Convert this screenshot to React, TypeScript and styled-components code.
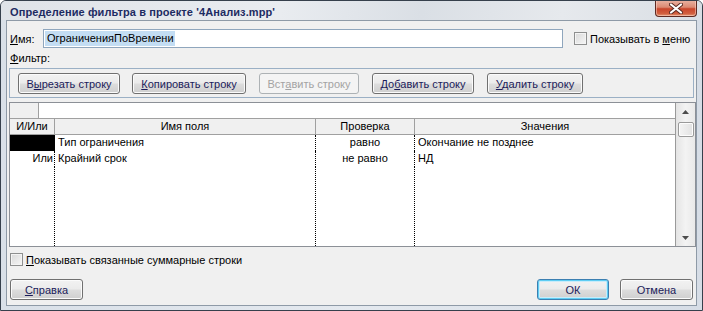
import React from 'react';
import styled, { createGlobalStyle, css } from 'styled-components';

const Global = createGlobalStyle`
  html, body { margin: 0; padding: 0; background: #fff; }
  body { font-family: "Liberation Sans", Arial, sans-serif; font-size: 11px; color: #000; }
  #root { width: 703px; height: 311px; }
  * { box-sizing: border-box; }
`;

const Window = styled.div`
  width: 703px;
  height: 311px;
  display: flex;
  flex-direction: column;
  background: linear-gradient(90deg, #d9e0e8, #e4e9ef 50%, #d6dde6);
  border: 1px solid #36404c;
  border-radius: 6px 6px 0 0;
  padding: 0 5px 4px 5px;
  overflow: hidden;
`;

const TitleBar = styled.div`
  height: 19px;
  margin: 0 -5px;
  padding: 0 5px 0 9px;
  display: flex;
  align-items: flex-start;
  justify-content: space-between;
  background: linear-gradient(100deg, #dfe3e8 0%, #e9ecf0 40%, #dadfe5 60%, #e6e9ed 80%, #d9dee4 100%);
`;

const Title = styled.div`
  font-weight: bold;
  font-size: 11px;
  color: #1d2b62;
  padding-top: 5px;
  letter-spacing: 0.1px;
`;

const Close = styled.div`
  width: 42px;
  height: 17px;
  margin-top: -1px;
  border: 1px solid #5e2a22;
  border-top: none;
  border-radius: 0 0 4px 4px;
  background: linear-gradient(#eab4a4 0%, #dc8a73 45%, #c9452b 55%, #d2603f 85%, #e39a77 100%);
  box-shadow: inset 0 0 0 1px rgba(255, 220, 210, 0.5);
  display: flex;
  align-items: center;
  justify-content: center;
`;

const Client = styled.div`
  flex: 1;
  display: flex;
  flex-direction: column;
  background: #f0f0f0;
  border: 1px solid #8e9aa7;
`;

const NameRow = styled.div`
  margin-top: 8px;
  padding-left: 3px;
  height: 19px;
  display: flex;
  align-items: center;
`;

const Label = styled.span<{ $w?: number }>`
  ${(p) => p.$w && css`width: ${p.$w}px;`}
  flex: none;
  white-space: nowrap;
`;

const U = styled.span`
  text-decoration: underline;
`;

const TextInput = styled.div`
  width: 520px;
  height: 19px;
  border: 1px solid #8fa6bd;
  background: #fff;
  padding: 2px 1px;
  display: flex;
  align-items: center;
`;

const Selected = styled.span`
  background: #c3ddf3;
  padding: 1px 1px 1px 2px;
  line-height: 13px;
`;

const CheckWrap = styled.label<{ $ml?: number }>`
  display: flex;
  align-items: center;
  gap: 3px;
  margin-left: ${(p) => p.$ml ?? 0}px;
  white-space: nowrap;
`;

const Box = styled.span`
  width: 13px;
  height: 13px;
  flex: none;
  border: 1px solid #8e8f8f;
  background: linear-gradient(135deg, #d9d9d9, #f6f6f6);
  box-shadow: inset 0 0 0 1px #f4f4f4;
`;

const FilterLabel = styled.div`
  margin-top: 3px;
  padding-left: 3px;
  line-height: 14px;
`;

const Group = styled.div`
  margin: 3px 0 0 2px;
  width: 685px;
  height: 30px;
  border: 1px solid #9bb0c5;
  padding: 4px 0 0 8px;
  display: flex;
  gap: 12px;
`;

const Button = styled.div<{ $w: number; $disabled?: boolean; $default?: boolean; $ml?: number }>`
  width: ${(p) => p.$w}px;
  height: 21px;
  flex: none;
  margin-left: ${(p) => p.$ml ?? 0}px;
  border: 1px solid #707070;
  border-radius: 3px;
  background: linear-gradient(#f2f2f2 0%, #ebebeb 48%, #dddddd 52%, #cfcfcf 100%);
  box-shadow: inset 0 0 0 1px #fbfbfb;
  color: #1b1b5a;
  display: flex;
  align-items: center;
  justify-content: center;
  white-space: nowrap;
  ${(p) =>
    p.$disabled &&
    css`
      border-color: #adb2b5;
      background: #f4f4f4;
      box-shadow: none;
      color: #a3a3a3;
    `}
  ${(p) =>
    p.$default &&
    css`
      border-color: #3c7fb1;
      box-shadow: inset 0 0 0 1px #5fcdf3, inset 0 0 0 2px #c9ecfa;
    `}
`;

const Grid = styled.div`
  margin: 4px 0 0 2px;
  width: 687px;
  height: 145px;
  border: 1px solid #8c9097;
  background: #fff;
  display: flex;
`;

const Table = styled.div`
  flex: 1;
  display: flex;
  flex-direction: column;
`;

const EditRow = styled.div`
  height: 16px;
  display: flex;
  border-bottom: 1px solid #a0a0a0;
`;

const Corner = styled.div`
  width: 29px;
  background: #f0f0f0;
  border-right: 1px solid #a0a0a0;
`;

const Cols = styled.div<{ $header?: boolean; $fill?: boolean }>`
  display: grid;
  grid-template-columns: 45px 261px 99px 1fr;
  height: 16px;
  line-height: 15px;
  ${(p) =>
    p.$header &&
    css`
      background: #f0f0f0;
      border-bottom: 1px solid #a0a0a0;
    `}
  ${(p) =>
    p.$fill &&
    css`
      flex: 1;
      height: auto;
    `}
`;

const HeadCell = styled.div<{ $last?: boolean }>`
  text-align: center;
  border-right: ${(p) => (p.$last ? 'none' : '1px solid #a0a0a0')};
  white-space: nowrap;
  overflow: hidden;
`;

const Cell = styled.div<{ $align?: 'left' | 'right' | 'center'; $last?: boolean; $black?: boolean }>`
  text-align: ${(p) => p.$align ?? 'left'};
  padding: 0 ${(p) => (p.$align === 'right' ? 1 : 0)}px 0 ${(p) => (p.$align === 'left' || !p.$align ? 3 : 0)}px;
  border-right: ${(p) => (p.$last ? 'none' : '1px dotted #000')};
  white-space: nowrap;
  overflow: hidden;
  background: ${(p) => (p.$black ? '#000' : 'transparent')};
`;

const ScrollBar = styled.div`
  width: 20px;
  flex: none;
  border-left: 1px solid #9a9a9a;
  background: linear-gradient(90deg, #e4e4e4, #f3f3f3 50%, #e9e9e9);
  display: flex;
  flex-direction: column;
  align-items: center;
`;

const Arrow = styled.div<{ $down?: boolean }>`
  height: 17px;
  width: 100%;
  display: flex;
  align-items: center;
  justify-content: center;
  margin-top: ${(p) => (p.$down ? 'auto' : '0')};
`;

const Thumb = styled.div`
  width: 16px;
  height: 15px;
  margin-top: 2px;
  border: 1px solid #9a9a9a;
  border-radius: 2px;
  background: linear-gradient(90deg, #f4f4f4, #e2e2e2);
  box-shadow: inset 0 0 0 1px #fdfdfd;
`;

const CheckRow = styled.div`
  margin-top: 6px;
  padding-left: 3px;
  height: 13px;
  display: flex;
`;

const BottomRow = styled.div`
  margin-top: 13px;
  padding-left: 3px;
  display: flex;
`;

const rows = [
  { andor: '', field: 'Тип ограничения', test: 'равно', value: 'Окончание не позднее', black: true },
  { andor: 'Или', field: 'Крайний срок', test: 'не равно', value: 'НД', black: false },
];

export default function App() {
  return (
    <>
      <Global />
      <Window>
        <TitleBar>
          <Title>Определение фильтра в проекте '4Анализ.mpp'</Title>
          <Close>
            <svg width="14" height="11" viewBox="0 0 14 11">
              <path
                d="M2 1.5 L12 9.5 M12 1.5 L2 9.5"
                stroke="#5a2a22"
                strokeWidth="4"
                strokeLinecap="round"
              />
              <path
                d="M2 1.5 L12 9.5 M12 1.5 L2 9.5"
                stroke="#ffffff"
                strokeWidth="2.2"
                strokeLinecap="round"
              />
            </svg>
          </Close>
        </TitleBar>
        <Client>
          <NameRow>
            <Label $w={33}>
              <U>И</U>мя:
            </Label>
            <TextInput>
              <Selected>ОграниченияПоВремени</Selected>
            </TextInput>
            <CheckWrap $ml={11}>
              <Box />
              <span>
                Показывать в <U>м</U>еню
              </span>
            </CheckWrap>
          </NameRow>
          <FilterLabel>
            <U>Ф</U>ильтр:
          </FilterLabel>
          <Group>
            <Button $w={102}>
              <span>
                В<U>ы</U>резать строку
              </span>
            </Button>
            <Button $w={114}>
              <span>
                <U>К</U>опировать строку
              </span>
            </Button>
            <Button $w={100} $disabled $ml={1}>
              <span>
                Вст<U>а</U>вить строку
              </span>
            </Button>
            <Button $w={102} $ml={1}>
              <span>
                До<U>б</U>авить строку
              </span>
            </Button>
            <Button $w={96} $ml={1}>
              <span>
                <U>У</U>далить строку
              </span>
            </Button>
          </Group>
          <Grid>
            <Table>
              <EditRow>
                <Corner />
              </EditRow>
              <Cols $header>
                <HeadCell>И/Или</HeadCell>
                <HeadCell>Имя поля</HeadCell>
                <HeadCell>Проверка</HeadCell>
                <HeadCell $last>Значения</HeadCell>
              </Cols>
              {rows.map((r, i) => (
                <Cols key={i}>
                  <Cell $align="right" $black={r.black}>
                    {r.andor}
                  </Cell>
                  <Cell>{r.field}</Cell>
                  <Cell $align="center">{r.test}</Cell>
                  <Cell $last>{r.value}</Cell>
                </Cols>
              ))}
              <Cols $fill>
                <Cell />
                <Cell />
                <Cell />
                <Cell $last />
              </Cols>
            </Table>
            <ScrollBar>
              <Arrow>
                <svg width="7" height="4" viewBox="0 0 7 4">
                  <path d="M0 4 L3.5 0 L7 4 Z" fill="#4d4d4d" />
                </svg>
              </Arrow>
              <Thumb />
              <Arrow $down>
                <svg width="7" height="4" viewBox="0 0 7 4">
                  <path d="M0 0 L3.5 4 L7 0 Z" fill="#4d4d4d" />
                </svg>
              </Arrow>
            </ScrollBar>
          </Grid>
          <CheckRow>
            <CheckWrap>
              <Box />
              <span>
                <U>П</U>оказывать связанные суммарные строки
              </span>
            </CheckWrap>
          </CheckRow>
          <BottomRow>
            <Button $w={73}>
              <span>
                <U>С</U>правка
              </span>
            </Button>
            <Button $w={72} $default $ml={454}>
              <span>ОК</span>
            </Button>
            <Button $w={73} $ml={11}>
              <span>Отмена</span>
            </Button>
          </BottomRow>
        </Client>
      </Window>
    </>
  );
}
